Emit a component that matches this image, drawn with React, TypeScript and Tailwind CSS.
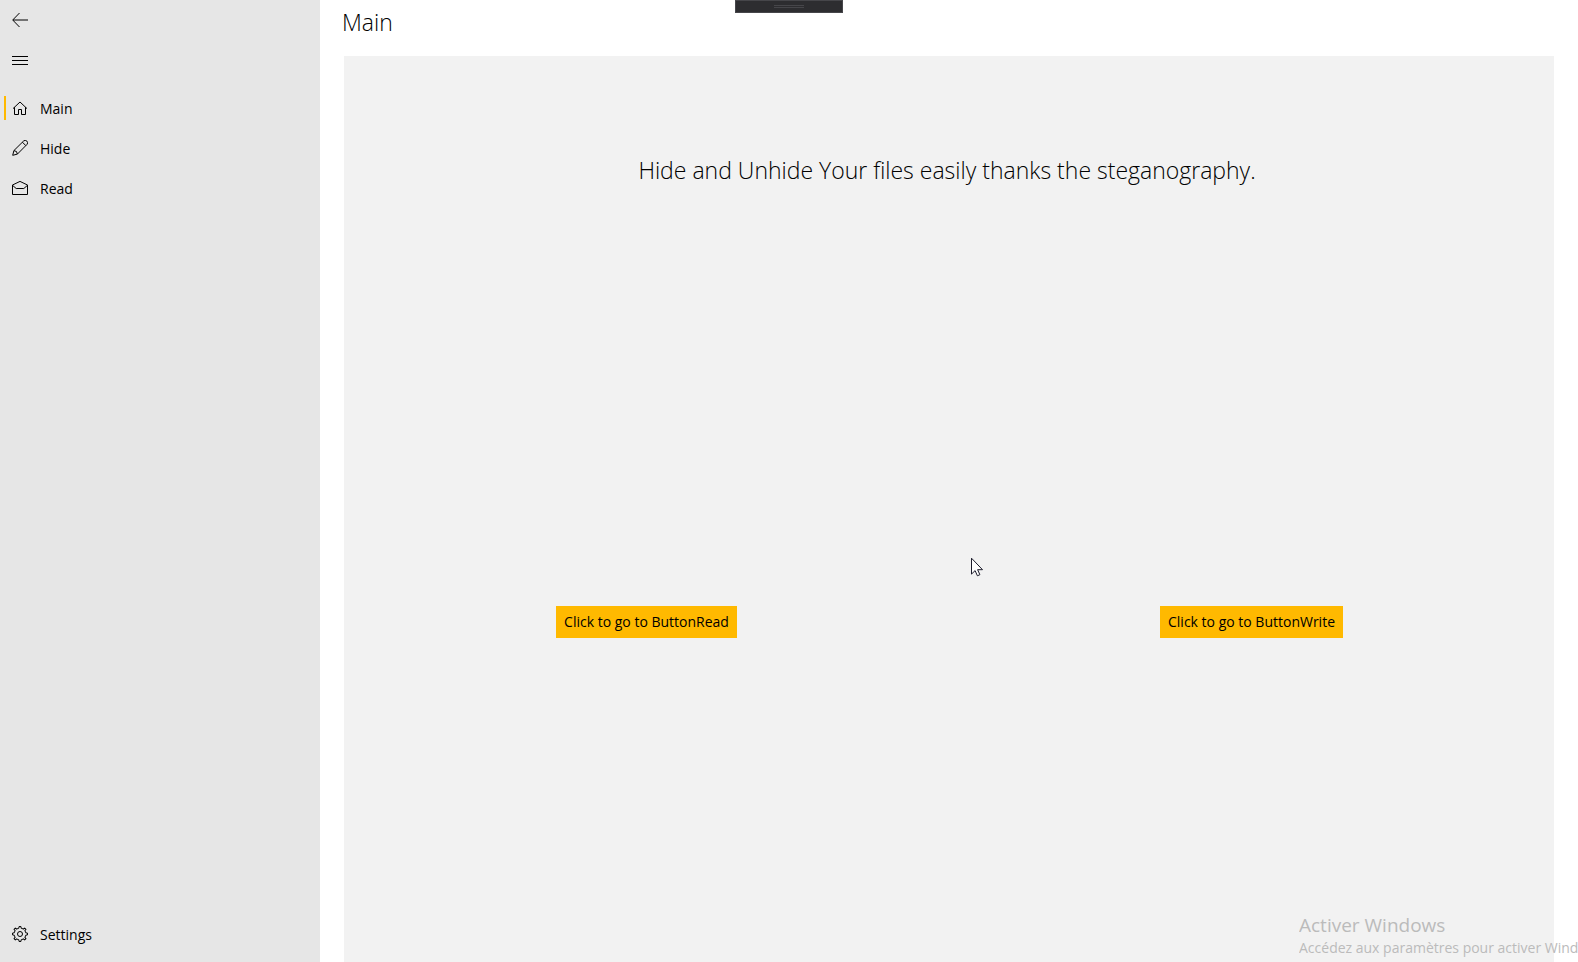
import type { ReactNode } from "react";

const icon = "h-4 w-4 shrink-0 fill-none stroke-black";

const HomeIcon = () => (
  <svg className={icon} viewBox="0 0 16 16" aria-hidden="true">
    <path d="M1 8.6 8 2l7 6.6M2.5 7.2v7.3h4v-5h3v5h4V7.2" />
  </svg>
);

const PencilIcon = () => (
  <svg className={icon} viewBox="0 0 16 16" aria-hidden="true">
    <path d="M.7 15.3 1.9 10.6 11.5 1.1a2.4 2.4 0 0 1 3.4 3.4L5.4 14.1.7 15.3ZM1.9 10.6A3.6 3.6 0 0 1 5.4 14.1M10.4 2.2l3.4 3.4" />
  </svg>
);

const MailIcon = () => (
  <svg className={icon} viewBox="0 0 16 16" aria-hidden="true">
    <path d="M.5 5 8 1.4 15.5 5v9.5H.5V5Zm0 .3L4.2 8.5h7.6l3.7-3.2" />
  </svg>
);

const GEAR_TEETH = [0, 45, 90, 135, 180, 225, 270, 315];

const GearIcon = () => (
  <svg className={icon} viewBox="0 0 16 16" aria-hidden="true">
    <circle cx="8" cy="8" r="2.5" />
    {GEAR_TEETH.map((angle) => (
      <path
        key={angle}
        transform={`rotate(${angle} 8 8)`}
        d="M5.7 2.45 6.8 2.3 7.1.5h1.8l.3 1.8 1.1.15"
      />
    ))}
  </svg>
);

const navItems: { label: string; icon: ReactNode; active?: boolean }[] = [
  { label: "Main", icon: <HomeIcon />, active: true },
  { label: "Hide", icon: <PencilIcon /> },
  { label: "Read", icon: <MailIcon /> },
];

function NavLink({ label, icon, active }: { label: string; icon: ReactNode; active?: boolean }) {
  return (
    <a
      href={`#${label.toLowerCase()}`}
      aria-current={active ? "page" : undefined}
      className="flex h-10 items-center pl-1 text-sm"
    >
      <span className={active ? "mr-1.5 h-6 w-0.5 bg-[#ffb900]" : "mr-1.5 h-6 w-0.5"} />
      {icon}
      <span className="ml-3 pt-0.5">{label}</span>
    </a>
  );
}

const actionButton = "h-8 bg-[#ffb900] px-2 text-sm whitespace-nowrap";

export default function App() {
  return (
    <div className="relative flex h-screen overflow-hidden bg-white font-['Open_Sans',sans-serif] text-black">
      <nav className="flex w-80 shrink-0 flex-col bg-[#e6e6e6] pb-2" aria-label="Navigation">
        <button type="button" aria-label="Back" className="flex h-10 w-10 items-center justify-center">
          <svg className={icon} viewBox="0 0 16 16" aria-hidden="true">
            <path d="M7.5 1 .7 8l6.8 7" />
            <path d="M1 8h15" />
          </svg>
        </button>
        <button type="button" aria-label="Menu" className="flex h-10 w-10 items-center justify-center">
          <svg className={icon} viewBox="0 0 16 16" aria-hidden="true">
            <path d="M0 4.5h16M0 8.5h16M0 12.5h16" />
          </svg>
        </button>
        <div className="mt-2 flex-1">
          {navItems.map((item) => (
            <NavLink key={item.label} {...item} />
          ))}
        </div>
        <NavLink label="Settings" icon={<GearIcon />} />
      </nav>

      <div className="flex min-w-0 flex-1 flex-col px-6">
        <h1 className="-ml-0.5 h-14 pt-1.5 text-[23px] leading-8 font-light">Main</h1>
        <main className="grid flex-1 grid-cols-2 grid-rows-[1fr_3fr] place-items-center bg-[#f2f2f2]">
          <p className="col-span-2 pt-0.5 pr-1 text-[23px] leading-8 font-light">
            Hide and Unhide Your files easily thanks the steganography.
          </p>
          <button type="button" className={actionButton}>
            Click to go to ButtonRead
          </button>
          <button type="button" className={actionButton}>
            Click to go to ButtonWrite
          </button>
        </main>
      </div>

      <div className="absolute top-0 left-1/2 flex h-[13px] w-[108px] -translate-x-1/2 flex-col items-center gap-px border border-[#46464a] bg-[#2d2d30] pt-1">
        <span className="h-px w-[30px] bg-[#46464a]" />
        <span className="h-px w-[30px] bg-[#46464a]" />
      </div>

      <svg className="absolute top-[557px] left-[971px] h-5 w-3" viewBox="0 0 12 20" aria-hidden="true">
        <path
          d="M.5 1.2v15.9l3.6-3.5 2.3 5.2 2.5-1.1-2.3-5h4.9L.5 1.2Z"
          fill="#fff"
          stroke="#1c1c2b"
        />
      </svg>

      <div className="absolute right-0 bottom-1 left-[1299px] overflow-hidden whitespace-nowrap text-[#bbbbbb]">
        <p className="pb-px text-[19px] leading-6">Activer Windows</p>
        <p className="text-sm leading-5">Accédez aux paramètres pour activer Windows.</p>
      </div>
    </div>
  );
}
